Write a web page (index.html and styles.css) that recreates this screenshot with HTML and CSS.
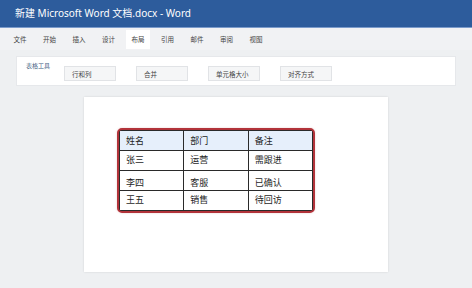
FILE: index.html
```html
<!DOCTYPE html>
<html lang="zh-CN">
<head>
  <meta charset="UTF-8">
  <title>新建 Microsoft Word 文档.docx - Word</title>
  <link rel="stylesheet" href="styles.css">
</head>
<body>

  <!-- Title bar -->
  <div class="titlebar">新建 Microsoft Word 文档.docx - Word</div>

  <!-- Ribbon tabs -->
  <div class="tabs">
    <span class="tab">文件</span>
    <span class="tab">开始</span>
    <span class="tab">插入</span>
    <span class="tab">设计</span>
    <span class="tab active">布局</span>
    <span class="tab">引用</span>
    <span class="tab">邮件</span>
    <span class="tab">审阅</span>
    <span class="tab">视图</span>
  </div>

  <!-- Ribbon panel -->
  <div class="ribbon">
    <span class="group-label">表格工具</span>
    <span class="rbtn">行和列</span>
    <span class="rbtn">合并</span>
    <span class="rbtn">单元格大小</span>
    <span class="rbtn">对齐方式</span>
  </div>

  <!-- Document page -->
  <div class="workspace">
    <div class="page">
      <table class="doc-table">
        <tr class="head">
          <td>姓名</td><td>部门</td><td>备注</td>
        </tr>
        <tr class="row-a">
          <td>张三</td><td>运营</td><td>需跟进</td>
        </tr>
        <tr class="row-b">
          <td>李四</td><td>客服</td><td>已确认</td>
        </tr>
        <tr class="row-c">
          <td>王五</td><td>销售</td><td>待回访</td>
        </tr>
      </table>
    </div>
  </div>

</body>
</html>
```

FILE: styles.css
```css
body {
  margin: 0;
  width: 472px;
  height: 288px;
  overflow: hidden;
  background: #eef0f2;
  font-family: "Noto Sans", "Noto Sans CJK SC", sans-serif;
}

.titlebar {
  height: 27px;
  line-height: 26px;
  padding-left: 15px;
  background: #2d5c9c;
  border-bottom: 1px solid #7b9bcb;
  color: #ffffff;
  font-size: 10px;
}

.tabs {
  display: flex;
  align-items: center;
  gap: 5.5px;
  height: 22px;
  padding-left: 8px;
  background: #f1f2f4;
}

.tab {
  width: 24px;
  height: 19px;
  line-height: 20px;
  text-align: center;
  font-size: 6.5px;
  color: #444;
}

.tab.active {
  background: #ffffff;
}

.ribbon {
  display: flex;
  align-items: flex-start;
  gap: 20px;
  height: 30px;
  margin: 6px 16px 0;
  padding-left: 9px;
  box-sizing: border-box;
  background: #ffffff;
  border: 1px solid #e6e8eb;
}

.group-label {
  margin-top: 4px;
  margin-right: -6px;
  font-size: 6px;
  color: #3d5a80;
}

.rbtn {
  margin-top: 9px;
  padding-left: 7px;
  box-sizing: border-box;
  width: 52px;
  height: 15px;
  line-height: 15px;
  background: #f5f6f7;
  border: 1px solid #e1e3e6;
  font-size: 6.5px;
  color: #444;
}

.workspace {
  padding-top: 11px;
}

.page {
  width: 304px;
  height: 175px;
  margin-left: 84px;
  padding: 33px 0 0 35px;
  box-sizing: border-box;
  background: #ffffff;
  box-shadow: 0 0 2px rgba(0, 0, 0, 0.12);
}

.doc-table {
  border-collapse: collapse;
  width: 194px;
  outline: 2px solid #b2333a;
  outline-offset: 0;
  border-radius: 3px;
  box-shadow: 0 0 2px 2px rgba(178, 51, 58, 0.25);
  font-size: 9px;
  color: #1e1e1e;
}

.doc-table td {
  width: 64px;
  height: 20px;
  padding: 0 0 0 6px;
  border: 1px solid #2a2a2a;
  box-sizing: border-box;
  vertical-align: middle;
}

.doc-table .head td {
  background: #e6effb;
}

.doc-table .row-a td {
  vertical-align: top;
  padding-top: 2px;
}

.doc-table .row-b td {
  vertical-align: bottom;
  padding-bottom: 1px;
}

.doc-table .row-c td {
  vertical-align: top;
  padding-top: 2px;
}
```
